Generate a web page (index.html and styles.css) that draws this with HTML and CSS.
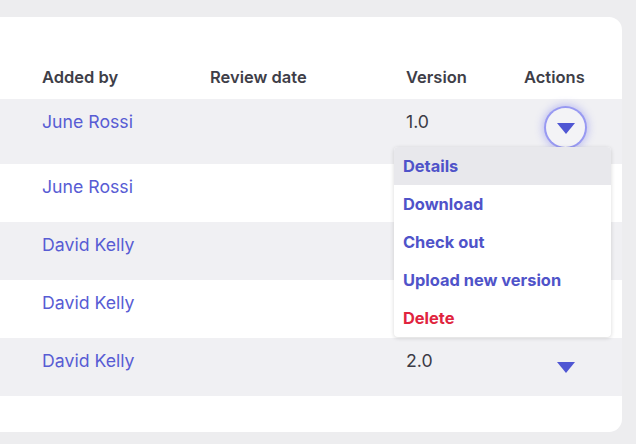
FILE: index.html
```html
<!DOCTYPE html>
<html lang="en">
<head>
  <meta charset="UTF-8" />
  <title>Documents</title>
  <link rel="stylesheet" href="styles.css">
</head>
<body>

  <!-- Documents table card -->
  <div class="card">
    <table class="docs">
      <thead>
        <tr>
          <th class="col-user">Added by</th>
          <th class="col-review">Review date</th>
          <th class="col-version">Version</th>
          <th class="col-actions">Actions</th>
        </tr>
      </thead>
      <tbody>
        <tr class="open">
          <td><a href="#">June Rossi</a></td>
          <td></td>
          <td>1.0</td>
          <td class="actions">
            <div class="menu-wrap">
              <button class="toggle focused"><span class="caret"></span></button>
              <ul class="menu">
                <li class="active">Details</li>
                <li>Download</li>
                <li>Check out</li>
                <li>Upload new version</li>
                <li class="danger">Delete</li>
              </ul>
            </div>
          </td>
        </tr>
        <tr>
          <td><a href="#">June Rossi</a></td>
          <td></td>
          <td></td>
          <td class="actions"></td>
        </tr>
        <tr>
          <td><a href="#">David Kelly</a></td>
          <td></td>
          <td></td>
          <td class="actions"></td>
        </tr>
        <tr>
          <td><a href="#">David Kelly</a></td>
          <td></td>
          <td></td>
          <td class="actions"></td>
        </tr>
        <tr>
          <td><a href="#">David Kelly</a></td>
          <td></td>
          <td>2.0</td>
          <td class="actions"><button class="toggle"><span class="caret"></span></button></td>
        </tr>
      </tbody>
    </table>
  </div>

</body>
</html>
```

FILE: styles.css
```css
body {
  margin: 0;
  padding: 17px 14px 0 0;
  background: #ededef;
  font-family: Inter, "Noto Sans", sans-serif;
  color: #3b3b45;
}

.card {
  width: 622px;
  height: 415px;
  background: #fff;
  border-radius: 0 13px 13px 0;
}

.docs {
  width: 100%;
  border-collapse: collapse;
  table-layout: fixed;
}

.docs th {
  height: 82px;
  padding: 0 0 11px 0;
  box-sizing: border-box;
  vertical-align: bottom;
  text-align: left;
  font-size: 16.5px;
  font-weight: 600;
  line-height: 22px;
  color: #3e3e48;
}

.col-user    { width: 210px; padding-left: 42px !important; }
.col-review  { width: 196px; }
.col-version { width: 118px; }
.col-actions { width: 98px; }

.docs td {
  height: 58px;
  padding: 11px 0 0 0;
  vertical-align: top;
  font-size: 17.7px;
  line-height: 24px;
  color: #3b3b45;
  box-sizing: border-box;
}
.docs td:first-child { padding-left: 42px; }

.docs tbody tr:nth-child(odd) { background: #f0f0f3; }
.docs tbody tr.open td { height: 65px; }

.docs a {
  color: #585cd4;
  text-decoration: none;
}

/* action toggle */
.toggle {
  display: flex;
  align-items: center;
  justify-content: center;
  width: 39px;
  height: 39px;
  margin: -2px 0 0 22px;
  padding: 0;
  border: none;
  border-radius: 50%;
  background: transparent;
  cursor: pointer;
}
.toggle.focused {
  background: #f3f3f6;
  box-shadow: 0 0 0 2px rgba(99, 102, 241, 0.5), 0 0 8px 3px rgba(99, 102, 241, 0.4);
}
.caret {
  width: 0;
  height: 0;
  margin-top: 1px;
  border-left: 9px solid transparent;
  border-right: 9px solid transparent;
  border-top: 11px solid #4f56d3;
}

.menu-wrap { position: relative; }

.menu {
  position: absolute;
  top: 39px;
  right: 11px;
  width: 217px;
  margin: 0;
  padding: 0;
  list-style: none;
  background: #fff;
  border-radius: 4px;
  box-shadow: 0 1px 4px rgba(0, 0, 0, 0.16);
  overflow: hidden;
  z-index: 10;
}
.menu li {
  height: 38px;
  padding: 0 9px;
  line-height: 38px;
  font-size: 16.4px;
  font-weight: 700;
  color: #4f53c9;
}
.menu li.active { background: #e8e8ec; }
.menu li.danger { color: #e0243e; }
```
